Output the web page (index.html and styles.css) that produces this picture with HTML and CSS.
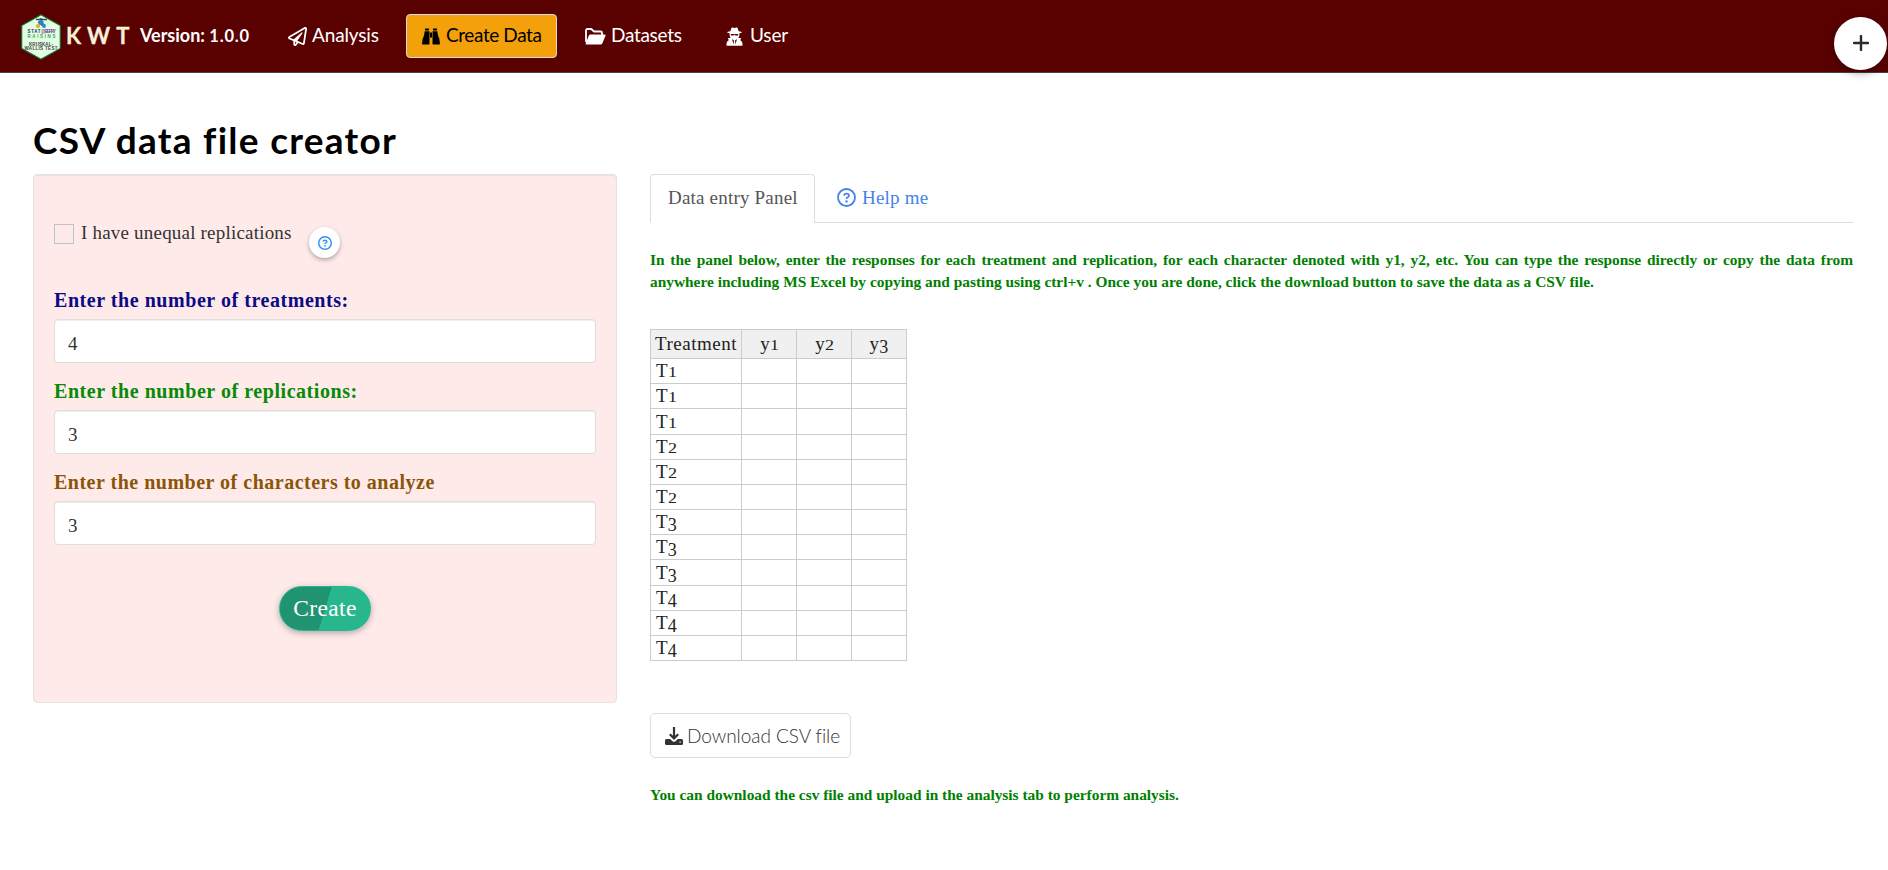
FILE: index.html
```html
<!DOCTYPE html>
<html lang="en">
<head>
<meta charset="utf-8">
<title>KWT</title>
<link rel="stylesheet" href="styles.css">
</head>
<body>
<nav class="navbar">
  <div class="brand">
    <svg class="logo" width="40" height="46" viewBox="0 0 40 46">
      <path d="M20 .8 39.3 11.500v23L20 45.300.7 34.500v-23z" fill="#e3ffe3" stroke="#146b2c" stroke-width="1.200"/>
      <path d="M15 5.500h11M20 4l1 8M17 8l7 3" stroke="#33495c" stroke-width="1.500"/>
      <circle cx="20" cy="8.500" r="2.600" fill="#2f7fc4"/>
      <circle cx="17" cy="12" r="2" fill="#f2a51e"/>
      <circle cx="23" cy="12" r="2" fill="#2c8fd0"/>
      <text x="6.500" y="18.500" textLength="13" class="logo-a">STAT</text>
      <text x="20" y="18.500" textLength="15" class="logo-b">@BERRY</text>
      <text x="6.500" y="24" textLength="28" class="logo-c">RAISINS</text>
      <text x="8" y="31.500" textLength="24" class="logo-d">KRUSKAL-</text>
      <text x="3.500" y="36" textLength="33" class="logo-d">WALLIS TEST</text>
    </svg>
    <span class="brand-name">KWT</span>
    <span class="version">Version: <span class="version-no">1.0.0</span></span>
  </div>
  <a class="nav-item nav-analysis">
    <svg width="19" height="19" viewBox="0 0 512 512"><path fill="currentColor" d="M440 6.500L24 246.400c-34.400 19.900-31.100 70.800 5.700 85.900L144 379.600V464c0 46.400 59.200 65.500 86.600 28.600l43.800-59.100 111.900 46.200c5.900 2.400 12.100 3.600 18.300 3.600 8.200 0 16.300-2.100 23.600-6.200 12.800-7.200 21.600-20 23.900-34.500l59.400-387.200c6.100-40.100-36.900-68.800-71.500-48.900zM192 464v-64.600l36.600 15.100L192 464zm212.600-28.700l-153.800-63.500L391 169.500c10.700-15.500-9.500-33.500-23.700-21.200L155.800 332.600 48 288 464 48l-59.400 387.300z"/></svg>
    <span>Analysis</span>
  </a>
  <a class="nav-item nav-create">
    <svg width="18" height="17" viewBox="0 0 18 17"><path fill="currentColor" d="M3 .5h4v2H3zM11 .5h4v2h-4zM2.700 3.300h4.800v12.400q0 .8-.8.8H.8q-.8 0-.8-.8Q0 11 2 7.500zM15.300 3.300h-4.800v12.400q0 .8.8.8h5.900q.8 0 .8-.8Q18 11 16 7.500zM8 4.500h2v5H8z"/></svg>
    <span>Create Data</span>
  </a>
  <a class="nav-item nav-datasets">
    <svg width="21" height="17" viewBox="0 0 21 17"><path d="M1 14V2.500Q1 1 2.500 1h3.800L9 3.500h6.500Q17 3.500 17 5v2" fill="none" stroke="currentColor" stroke-width="1.800"/><path d="M5.500 6.500h14.200q1.300 0 .8 1.200l-3.200 7.800q-.5 1-1.600 1H1.500q-1.300 0-.8-1.200l3.200-7.700q.5-1.100 1.600-1.100z" fill="currentColor"/></svg>
    <span>Datasets</span>
  </a>
  <a class="nav-item nav-user">
    <svg width="17" height="19" viewBox="0 0 17 19"><path fill="currentColor" fill-rule="evenodd" d="M5.500.8Q6.500.2 8.500 1q2-.8 3-.2l1.200 3.400q3.300.4 3.300 1t-2.500 1l-.2 2.600q-.3 1.400-1 2.200h2.700l-.7 2.300q2.200 1.300 2.200 3.400v1.500q0 .6-.8.600H1.300q-.8 0-.8-.6v-1.500q0-2.100 2.200-3.400L2 11h2.700q-.8-.9-1-2.200L3.500 6.200Q1 5.800 1 5.200t3.300-1zM4.800 7v1.500h2.900L8.500 7.500l.8 1h2.900V7zM6 12l1.500 5.500L8 13.500zM11 12l-1.500 5.500L9 13.500z"/></svg>
    <span>User</span>
  </a>
  <button class="fab" aria-label="Add">
    <svg width="16" height="16" viewBox="0 0 16 16"><path d="M8 1v14M1 8h14" stroke="#2b2b2b" stroke-width="2.400" stroke-linecap="round"/></svg>
  </button>
</nav>

<main class="page">
  <h1 class="title">CSV data file creator</h1>
  <div class="columns">
    <form class="well">
      <div class="check-row">
        <span class="checkbox"></span>
        <span class="check-label">I have unequal replications</span>
        <span class="hint">
          <svg width="14" height="14" viewBox="0 0 19 19"><circle cx="9.500" cy="9.500" r="8.500" fill="none" stroke="currentColor" stroke-width="2"/><path d="M7 7.600Q7.100 5.700 9.500 5.700q2.500 0 2.500 1.900 0 1.200-1.300 1.800-1.200.5-1.200 1.500" fill="none" stroke="currentColor" stroke-width="1.900"/><circle cx="9.500" cy="13.400" r="1.200" fill="currentColor"/></svg>
        </span>
      </div>
      <label class="label navy">Enter the number of treatments:</label>
      <div class="input">4</div>
      <label class="label green">Enter the number of replications:</label>
      <div class="input">3</div>
      <label class="label brown">Enter the number of characters to analyze</label>
      <div class="input">3</div>
      <div class="create-row"><button type="button" class="create">Create</button></div>
    </form>

    <section class="content">
      <div class="tabs">
        <a class="tab active">Data entry Panel</a>
        <a class="tab help">
          <svg width="19" height="19" viewBox="0 0 19 19"><circle cx="9.500" cy="9.500" r="8.500" fill="none" stroke="currentColor" stroke-width="1.800"/><path d="M7 7.600Q7.100 5.700 9.500 5.700q2.500 0 2.500 1.900 0 1.200-1.300 1.800-1.200.5-1.200 1.500" fill="none" stroke="currentColor" stroke-width="1.700"/><circle cx="9.500" cy="13.400" r="1.200" fill="currentColor"/></svg>
          <span>Help me</span>
        </a>
      </div>
      <p class="note intro">In the panel below, enter the responses for each treatment and replication, for each character denoted with y1, y2, etc. You can type the response directly or copy the data from anywhere including MS Excel by copying and pasting using ctrl+v . Once you are done, click the download button to save the data as a CSV file.</p>
      <table class="sheet">
        <tr><th class="first">Treatment</th><th>y<span class="num">1</span></th><th>y<span class="num">2</span></th><th>y<span class="num low">3</span></th></tr>
        <tr><td>T<span class="num">1</span></td><td></td><td></td><td></td></tr>
        <tr><td>T<span class="num">1</span></td><td></td><td></td><td></td></tr>
        <tr class="tall"><td>T<span class="num">1</span></td><td></td><td></td><td></td></tr>
        <tr><td>T<span class="num">2</span></td><td></td><td></td><td></td></tr>
        <tr><td>T<span class="num">2</span></td><td></td><td></td><td></td></tr>
        <tr><td>T<span class="num">2</span></td><td></td><td></td><td></td></tr>
        <tr><td>T<span class="num low">3</span></td><td></td><td></td><td></td></tr>
        <tr><td>T<span class="num low">3</span></td><td></td><td></td><td></td></tr>
        <tr class="tall"><td>T<span class="num low">3</span></td><td></td><td></td><td></td></tr>
        <tr><td>T<span class="num low">4</span></td><td></td><td></td><td></td></tr>
        <tr><td>T<span class="num low">4</span></td><td></td><td></td><td></td></tr>
        <tr><td>T<span class="num low">4</span></td><td></td><td></td><td></td></tr>
      </table>
      <a class="download">
        <svg width="18" height="18" viewBox="0 0 18 18"><path d="M9 0v11M4.800 7.200 9 11.400l4.200-4.200" fill="none" stroke="currentColor" stroke-width="2.200"/><path fill="currentColor" fill-rule="evenodd" d="M1.500 12h3.700l2.300 2.200q1.500 1.200 3 0l2.300-2.200h3.700Q18 12 18 13.500v3q0 1.500-1.500 1.500h-15Q0 18 0 16.500v-3Q0 12 1.500 12zM14.500 14.500v1.300h1.300v-1.300z"/></svg>
        <span>Download CSV file</span>
      </a>
      <p class="note">You can download the csv file and upload in the analysis tab to perform analysis.</p>
    </section>
  </div>
</main>
</body>
</html>
```
FILE: styles.css
```css
* { box-sizing: border-box; }

body {
  margin: 0;
  background: #fff;
  color: #333;
  font: 19px/26px "Liberation Serif", serif;
  letter-spacing: .2px;
  overflow: hidden;
}

.navbar {
  display: flex;
  align-items: center;
  height: 73px;
  padding-left: 21px;
  background: #590000;
  border-bottom: 1px solid #444;
  color: #fff;
  font-family: Lato, sans-serif;
}

.brand { display: flex; align-items: center; width: 252px; height: 46px; margin-top: 2px; }
.brand > span { margin-top: -3px; }
.logo { flex: none; display: block; margin-right: 5px; }
.logo text { font: bold 4.500px "Liberation Sans", sans-serif; letter-spacing: 0; }
.logo-a { fill: #26335f; }
.logo-b { fill: #7a4a9a; }
.logo-c { fill: #3ba55c; }
.logo-d { fill: #444; }
.brand-name { width: 74px; color: #f5f0d5; font-size: 22px; font-weight: 700; letter-spacing: 6px; -webkit-text-stroke: .3px; }
.version { font-size: 18px; font-weight: 700; letter-spacing: 0; white-space: nowrap; }
.version-no { font-size: 16.500px; letter-spacing: .8px; }

.nav-item { display: flex; align-items: center; height: 44px; font-size: 19px; letter-spacing: -.15px; white-space: nowrap; }
.nav-item svg { flex: none; }
.nav-item span { margin-top: -2px; }
.nav-analysis { gap: 5px; padding-left: 15px; width: 133px; }
.nav-create { gap: 6px; padding-left: 15px; width: 151px; border: 1px solid #dbdbdb; border-radius: 4px; background: #f3a00a; color: #000; letter-spacing: -.4px; }
.nav-datasets { gap: 5px; padding-left: 28px; width: 141px; letter-spacing: -.3px; }
.nav-user { gap: 7px; padding-left: 28px; }

.fab {
  display: flex;
  align-items: center;
  justify-content: center;
  width: 53px;
  height: 53px;
  margin: 14px 1px 0 auto;
  padding: 0;
  border: 0;
  border-radius: 50%;
  background: #fff;
  box-shadow: 0 3px 8px rgba(0, 0, 0, .35);
}

.page { padding: 0 35px 0 33px; }
.title { margin: 0; padding-top: 47px; height: 101px; color: #000; font: 700 37px/40px Lato, sans-serif; letter-spacing: 1.280px; }

.columns { display: grid; grid-template-columns: 584px 1203px; column-gap: 33px; align-items: start; }

.well {
  height: 529px;
  padding: 49px 20px 0;
  border: 1px solid #e3e3e3;
  border-radius: 4px;
  background: #ffeaea;
  box-shadow: inset 0 1px 1px rgba(0, 0, 0, .05);
}

.check-row { display: flex; height: 62px; }
.checkbox { width: 20px; height: 20px; margin: 0 7px 0 0; border: 1px solid #bdc3cc; }
.check-label { width: 228px; margin-top: -4px; }
.hint {
  display: flex;
  align-items: center;
  justify-content: center;
  width: 31px;
  height: 31px;
  margin-top: 3px;
  border-radius: 50%;
  background: #fff;
  color: #2e8fff;
  box-shadow: 0 2px 4px rgba(0, 0, 0, .3);
}

.label { display: block; height: 33px; padding-top: 1px; font-weight: 700; font-size: 20px; letter-spacing: .55px; }
.navy { color: #0b0b86; }
.green { color: #058b05; }
.brown { color: #8b5507; letter-spacing: .5px; }
.input {
  height: 44px;
  margin-bottom: 14px;
  padding: 11px 13px 9px;
  border: 1px solid #ddd;
  border-radius: 4px;
  background: #fff;
  box-shadow: inset 0 1px 1px rgba(0, 0, 0, .075);
}

.create-row { display: flex; justify-content: center; padding-top: 27px; }
.create {
  width: 92px;
  height: 45px;
  padding: 0;
  border: 1px solid #28b78d;
  border-radius: 23px;
  background: linear-gradient(107deg, #209370 50%, #28b78d 50.500%);
  color: #fff;
  font: 23.500px/43px "Liberation Serif", serif;
  letter-spacing: .4px;
  box-shadow: 0 2px 6px rgba(0, 0, 0, .3);
}

.tabs { display: flex; height: 49px; border-bottom: 1px solid #ddd; }
.tab { display: flex; align-items: center; height: 49px; padding-bottom: 1px; }
.active { width: 165px; padding-left: 17px; border: 1px solid #ddd; border-bottom-color: #fff; border-radius: 4px 4px 0 0; background: #fff; color: #555; }
.help { gap: 6px; padding: 0 0 2px 22px; color: #4582ec; }
.help span { padding-top: 1px; }

.note { margin: 0; color: #008000; font-size: 15.400px; font-weight: 700; line-height: 22px; letter-spacing: 0; }
.intro { margin: 26px 0 36px; text-align: justify; }

.sheet { width: 257px; border-collapse: collapse; table-layout: fixed; color: #222; }
.sheet th, .sheet td { padding: 0 5px; border: 1px solid #ccc; white-space: nowrap; }
.sheet th { width: 55px; height: 29px; background: #f0f0f0; font-weight: 400; line-height: 26px; }
.sheet .first { width: 91px; padding: 0; letter-spacing: .5px; }
.sheet td { height: 25px; line-height: 22px; }
.sheet .tall td { height: 26px; }
.num { display: inline-block; height: 14px; font-size: 15px; line-height: 14px; transform: scaleX(1.200); transform-origin: left; }
.low { position: relative; top: 3px; font-size: 18px; transform: none; }

.download {
  display: flex;
  align-items: center;
  gap: 4px;
  width: 201px;
  height: 45px;
  margin: 52px 0 26px;
  padding-left: 14px;
  border: 1px solid #ddd;
  border-radius: 5px;
  font-family: Lato, sans-serif;
  font-size: 19px;
  font-weight: 300;
  letter-spacing: -.05px;
  white-space: nowrap;
}
```
